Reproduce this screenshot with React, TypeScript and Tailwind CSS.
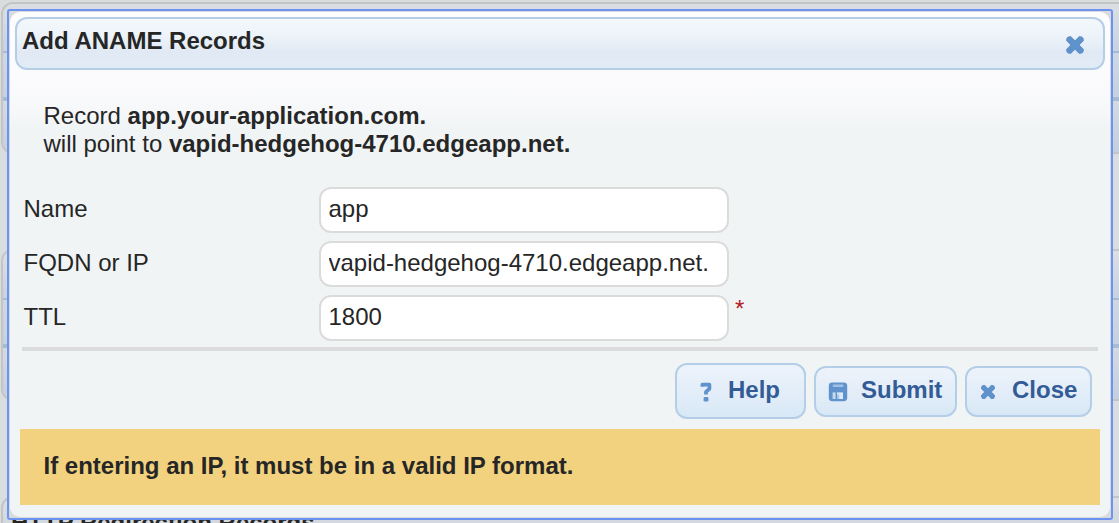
import type { ReactNode } from "react";

const fields = [
  { label: "Name", value: "app", required: false },
  { label: "FQDN or IP", value: "vapid-hedgehog-4710.edgeapp.net.", required: false },
  { label: "TTL", value: "1800", required: true },
];

function CrossIcon({ className }: { className: string }) {
  return (
    <svg viewBox="0 0 20 20" className={className} fill="none" stroke="#5f91ca" strokeWidth="6.4" strokeLinecap="square" strokeLinejoin="round">
      <path d="M5.6 5.6L14.4 14.4M14.4 5.6L5.6 14.4" />
      <path d="M4.4 4.4L15.6 15.6M15.6 4.4L4.4 15.6" strokeLinecap="round" strokeWidth="6" />
    </svg>
  );
}

function QuestionIcon() {
  return (
    <svg viewBox="0 0 12 20" className="mt-[2px] block h-[20px] w-[12px]" fill="none">
      <path d="M2.4 4.8V2.7H9.4V6.8L6 9.8V12.4" stroke="#6093cc" strokeWidth="3.8" strokeLinejoin="round" />
      <rect x="3.6" y="15" width="4.8" height="4.6" rx="1.3" fill="#6093cc" />
    </svg>
  );
}

function DiskIcon() {
  return (
    <svg viewBox="0 0 20 20" className="mt-[2px] block h-[20px] w-[20px]">
      <rect x="0.8" y="0.6" width="18.4" height="18.6" rx="3.4" fill="#6092cc" />
      <rect x="4.8" y="2.6" width="10.6" height="2.4" rx="0.5" fill="#a0c1e5" />
      <rect x="4.6" y="10.4" width="3" height="6.6" fill="#c6daef" />
      <rect x="9" y="10.4" width="6" height="6.6" fill="#dce9f6" />
      <rect x="9" y="12.4" width="2.2" height="4.6" fill="#a9c6e7" />
    </svg>
  );
}

function ActionButton({ className, children }: { className: string; children: ReactNode }) {
  return (
    <button
      className={`flex shrink-0 items-center rounded-[12px] border-2 border-[#b5cee8] bg-linear-to-b from-[#edf3fb] to-[#d9e8f6] font-bold text-[#335b95] ${className}`}
    >
      {children}
    </button>
  );
}

function RecordCard() {
  return (
    <div className="h-[152px] w-[1140px] shrink-0 overflow-hidden rounded-[12px] border-2 border-[#c4c4c5]">
      <div className="h-[47px] bg-linear-to-b from-[#dcdfe2] to-[#c7d3e0]" />
      <div className="h-[50px] border-t-2 border-b-4 border-[#a7bcd2] bg-linear-to-b from-[#cfd8e1] to-[#c5d2df]" />
      <div className="h-[51px] bg-linear-to-b from-[#d3dae0] to-[#c3d0de]" />
    </div>
  );
}

export default function App() {
  return (
    <div className="relative h-[523px] w-[1119px] overflow-hidden bg-[#d9dddd] font-['Liberation_Sans',Arial,sans-serif] text-[24px] leading-[28px] text-[#262626]">
      <div className="flex h-full flex-col gap-[95px] overflow-hidden pt-[2px] pl-[1px]">
        <RecordCard />
        <RecordCard />
        <div className="h-[60px] w-[1140px] shrink-0 rounded-[12px] border-2 border-[#c4c4c5] bg-linear-to-b from-[#dcdfe2] to-[#c7d0de] pt-[11px] pl-[8px] font-bold">
          HTTP Redirection Records
        </div>
      </div>

      <section
        role="dialog"
        className="absolute top-[9px] left-[7px] h-[511px] w-[1106px] rounded-[3px] border-2 border-[#6b93f2] bg-[#d8dadb] p-px"
      >
        <div className="flex h-full flex-col rounded-[10px] bg-[linear-gradient(to_bottom,#fdfdfe_0px,#fbfbfd_65px,#f7f8fa_95px,#f0f4f5_118px)]">
          <header className="mx-[5px] mt-[5px] flex h-[53px] shrink-0 items-center justify-between rounded-[12px] border-2 border-[#b5cee8] bg-[linear-gradient(to_bottom,#f3f8fb_0%,#edf3f9_35%,#e0e9f4_68%,#e2ecf6_100%)] pr-[18px] pl-[5px]">
            <h1 className="pb-[5px] font-bold">Add ANAME Records</h1>
            <button aria-label="Close dialog" className="mt-[2px]">
              <CrossIcon className="block h-[20px] w-[20px]" />
            </button>
          </header>

          <p className="mt-[32px] pl-[33.5px]">
            Record <b>app.your-application.com.</b>
            <br />
            will point to <b>vapid-hedgehog-4710.edgeapp.net.</b>
          </p>

          <form className="mt-[29px] flex flex-col gap-[8px] pl-[13.5px]">
            {fields.map((field) => (
              <div key={field.label} className="flex h-[46px]">
                <label className="w-[295.5px] pt-[8px]">{field.label}</label>
                <input
                  defaultValue={field.value}
                  aria-label={field.label}
                  className="h-[46px] w-[410px] rounded-[12px] border-2 border-[#dbdbdb] bg-white pb-[3px] pl-[7.5px]"
                />
                {field.required && <span className="pl-[6px] text-[#b3201f]">*</span>}
              </div>
            ))}
          </form>

          <div className="mt-[6px] mr-[12px] ml-[12px] h-[4px] shrink-0 bg-[#dbdbdb]" />

          <div className="mt-[12px] mr-[18px] flex items-center justify-end gap-[8px]">
            <ActionButton className="h-[56px] w-[131px] pl-[23px]">
              <QuestionIcon />
              <span className="pb-[3px] pl-[16px]">Help</span>
            </ActionButton>
            <ActionButton className="h-[51px] w-[143px] pl-[12px]">
              <DiskIcon />
              <span className="pb-[3px] pl-[13px]">Submit</span>
            </ActionButton>
            <ActionButton className="h-[51px] w-[127px] pl-[13px]">
              <CrossIcon className="mt-[1px] block h-[16px] w-[16px]" />
              <span className="pb-[3px] pl-[16px]">Close</span>
            </ActionButton>
          </div>

          <div className="mx-[10px] mt-[10px] flex h-[76px] shrink-0 items-center bg-[#f2d27f] pb-[2px] pl-[23.5px] font-bold">
            If entering an IP, it must be in a valid IP format.
          </div>
        </div>
      </section>
    </div>
  );
}
